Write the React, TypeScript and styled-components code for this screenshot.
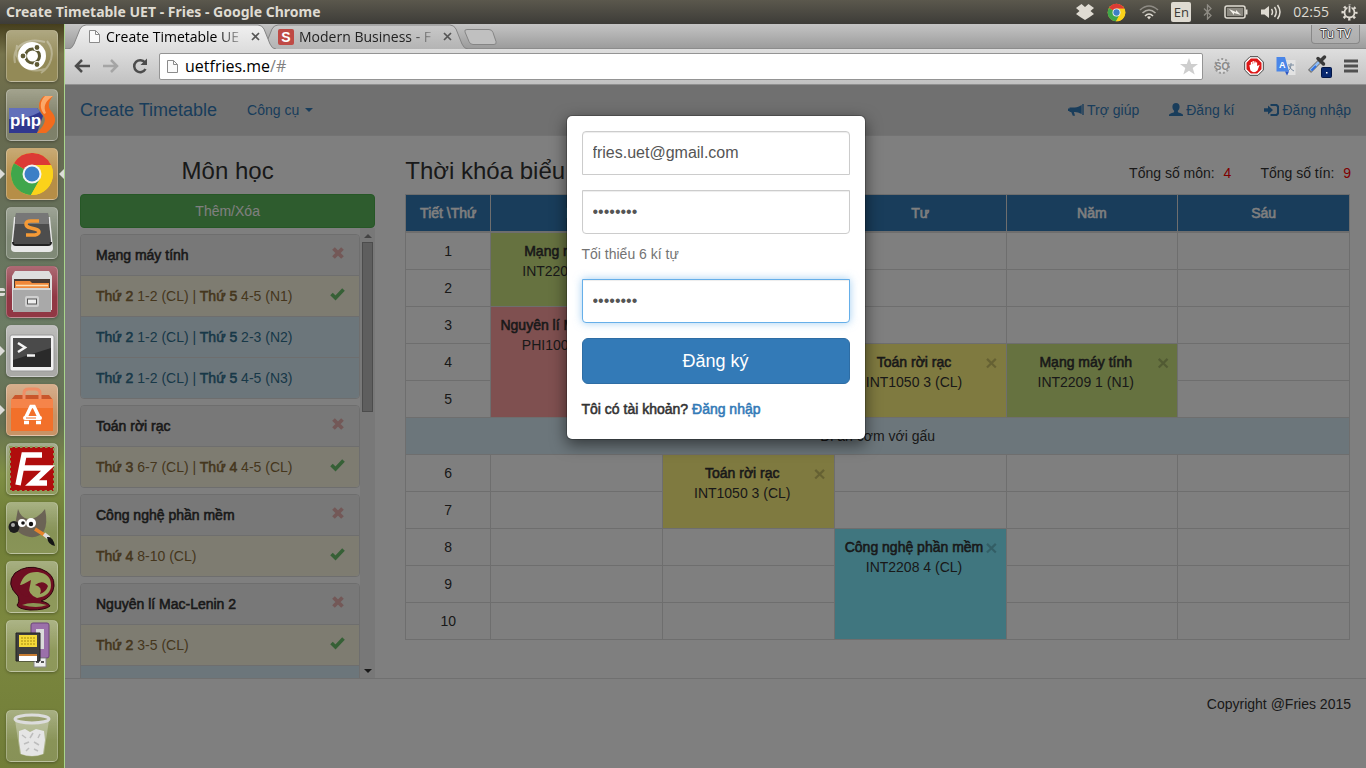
import React from "react";
import styled, { createGlobalStyle, css } from "styled-components";

const uiFont = `"Open Sans", "Noto Sans", sans-serif`;
const pageFont = `"Liberation Sans", Arial, sans-serif`;

const GlobalStyle = createGlobalStyle`
  *, *::before, *::after { box-sizing: border-box; }
  html, body { margin: 0; padding: 0; }
  button, input { font-family: inherit; }
  a { color: inherit; text-decoration: none; }
`;

/* ---------- desktop ---------- */

const Desktop = styled.div`
  display: flex;
  flex-direction: column;
  height: 100vh;
  overflow: hidden;
  background: #3c3b37;
`;

const Panel = styled.header`
  display: flex;
  align-items: center;
  justify-content: space-between;
  height: 24px;
  flex: none;
  padding: 0 8px 0 6px;
  background: linear-gradient(#5b584d, #3d3c38);
  color: #dfdbd2;
  font: 700 14px/24px "Noto Sans", sans-serif;
`;

const Indicators = styled.div`
  display: flex;
  align-items: center;
  gap: 12px;
  font-weight: 400;
  font-family: ${uiFont};

  svg { display: block; }
`;

const Keyboard = styled.span`
  width: 20px;
  height: 20px;
  border-radius: 2px;
  background: #dfdbd2;
  color: #3c3b37;
  font-size: 13px;
  line-height: 20px;
  text-align: center;
`;

const Workspace = styled.div`
  display: flex;
  flex: 1;
  min-height: 0;
`;

const Launcher = styled.nav`
  display: flex;
  flex-direction: column;
  gap: 7px;
  width: 65px;
  flex: none;
  padding: 6px 6px 6px;
  border-right: 1px solid #a9d48c;
  background: linear-gradient(
    #453e1c 0,
    #77744c 30px,
    #66684c 90px,
    #66705a 190px,
    #6c7c64 300px,
    #667052 400px,
    #7f8f45 450px,
    #6f7d36 500px,
    #7c883f 600px,
    #717d38 100%
  );
`;

const LauncherItem = styled.button<{ $tint?: string; $last?: boolean }>`
  position: relative;
  width: 52px;
  height: 52px;
  flex: none;
  padding: 0;
  border: 1px solid rgba(255, 255, 255, 0.25);
  border-radius: 5px;
  background: linear-gradient(rgba(255, 255, 255, 0.28), rgba(255, 255, 255, 0.04) 60%),
    ${(p) => p.$tint ?? "rgba(255, 255, 255, 0.12)"};
  box-shadow: 0 1px 3px rgba(0, 0, 0, 0.3);
  ${(p) => p.$last && "margin-top: auto;"}

  svg { display: block; width: 50px; height: 50px; }
`;

const Pip = styled.i<{ $side: "left" | "right" }>`
  position: absolute;
  top: 20px;
  ${(p) => p.$side}: -7px;
  border: 5px solid transparent;
  border-${(p) => p.$side}-color: #dcdcd8;
  border-${(p) => (p.$side === "left" ? "right" : "left")}-width: 0;
`;

const DoublePip = styled.i`
  position: absolute;
  top: 21px;
  left: -7px;
  width: 5px;
  height: 8px;
  border: solid #dcdcd8;
  border-width: 3px 0;
  border-radius: 0 2px 2px 0;
`;

/* ---------- browser ---------- */

const Browser = styled.div`
  display: flex;
  flex-direction: column;
  flex: 1;
  min-width: 0;
  font-family: ${uiFont};
`;

const TabStrip = styled.div`
  display: flex;
  align-items: flex-start;
  height: 25px;
  flex: none;
  padding-left: 3px;
  background: linear-gradient(#c4c4c4, #9c9c9c);
  border-bottom: 1px solid #8c8c8c;
`;

const Tab = styled.div<{ $active?: boolean }>`
  position: relative;
  z-index: ${(p) => (p.$active ? 2 : 1)};
  display: flex;
  align-items: center;
  gap: 5px;
  width: 208px;
  height: 25px;
  margin-right: -16px;
  padding: 0 16px 0 ${(p) => (p.$active ? 20 : 18)}px;
  color: ${(p) => (p.$active ? "#000" : "#222")};
  font-size: 14px;
  line-height: 24px;
`;

const TabShape = styled.svg`
  position: absolute;
  inset: 0;
  z-index: -1;
  width: 100%;
  height: 100%;
`;

const TabTitle = styled.span`
  flex: 1;
  overflow: hidden;
  white-space: nowrap;
  mask-image: linear-gradient(90deg, #000 80%, transparent);
`;

const PlainButton = styled.button`
  display: flex;
  align-items: center;
  justify-content: center;
  padding: 0;
  border: 0;
  background: none;
  color: #555;
`;

const NewTab = styled(PlainButton)`
  margin: 5px 0 0 11px;
`;

const Profile = styled.button`
  height: 19px;
  margin: 1px 6px 0 auto;
  padding: 0 8px;
  border: 1px solid #888;
  border-top: 0;
  border-radius: 0 0 4px 4px;
  background: linear-gradient(#b8b8b8, #adadad);
  color: #fff;
  font-size: 12px;
  line-height: 18px;
  text-shadow: 1px 0 #444, -1px 0 #444, 0 1px #444, 0 -1px #444;
`;

const Toolbar = styled.div`
  display: flex;
  align-items: center;
  height: 36px;
  flex: none;
  padding: 0 8px 1px 7px;
  background: linear-gradient(#dedede, #c1c1c1);
  border-bottom: 1px solid #909090;
`;

const ToolButton = styled(PlainButton)`
  width: 20px;
  height: 24px;
  margin-right: 9px;
`;

const Omnibox = styled.div`
  display: flex;
  align-items: center;
  gap: 6px;
  flex: 1;
  height: 27px;
  padding: 0 4px 0 6px;
  border: 1px solid #949494;
  border-radius: 2px;
  background: #fff;
  color: #000;
  font-size: 16px;
  line-height: 25px;

  em { font-style: normal; color: #808080; }
  svg:last-child { margin-left: auto; }
`;

const Extensions = styled.div`
  display: flex;
  align-items: center;
  gap: 12px;
  padding-left: 9px;
`;

/* ---------- page ---------- */

const Viewport = styled.div`
  position: relative;
  display: flex;
  flex-direction: column;
  flex: 1;
  min-height: 0;
  background: #fff;
  color: #333;
  font: 14px/20px ${pageFont};
`;

const emphasis = css`
  font-weight: 400;
  -webkit-text-stroke: 0.04em currentColor;
`;

const Strong = styled.strong`
  ${emphasis}
`;

const Navbar = styled.nav`
  display: flex;
  align-items: center;
  height: 51px;
  flex: none;
  padding: 0 15px;
  gap: 30px;
  border-bottom: 1px solid #e7e7e7;
  background: #e0e0e0;
  color: #337ab7;
`;

const Brand = styled.a`
  font-size: 18px;
`;

const NavLink = styled.a`
  display: flex;
  align-items: center;
  gap: 3px;
`;

const Caret = styled.i`
  margin-left: 3px;
  border: 4px solid transparent;
  border-top-color: currentColor;
  border-bottom-width: 0;
`;

const NavRight = styled.div`
  display: flex;
  gap: 30px;
  margin-left: auto;
`;

const Main = styled.main`
  display: grid;
  grid-template-columns: 1fr 3fr;
  flex: 1;
  min-height: 0;
`;

const Column = styled.section`
  display: flex;
  flex-direction: column;
  min-width: 0;
  min-height: 0;
  padding: 20px 15px 0;
`;

const Heading = styled.h3`
  margin: 0 0 8px;
  font-weight: 400;
  font-size: 24px;
  line-height: 30px;
  text-align: center;
`;

const AddButton = styled.button`
  height: 34px;
  flex: none;
  border: 1px solid #4cae4c;
  border-radius: 4px;
  background: #5cb85c;
  color: #fff;
  font-size: 14px;
`;

const Scroller = styled.div`
  display: flex;
  flex: 1;
  min-height: 0;
  overflow: hidden;
`;

const CourseList = styled.div`
  flex: 1;
  padding-top: 6px;
`;

const Course = styled.section`
  margin-bottom: 6px;
  border: 1px solid #ddd;
  border-radius: 4px;
  overflow: hidden;
`;

const CourseRow = styled.div<{ $kind: "head" | "chosen" | "free" }>`
  display: flex;
  align-items: center;
  justify-content: space-between;
  height: 41px;
  padding: 0 14px 0 15px;
  border-bottom: 1px solid #ddd;
  background: ${(p) => ({ head: "#f0f0f0", chosen: "#fcf8e3", free: "#d9edf7" })[p.$kind]};
  color: ${(p) => ({ head: "#333", chosen: "#8a6d3b", free: "#31708f" })[p.$kind]};

  &:last-child { height: 40px; border-bottom: 0; }
  svg { display: block; margin-bottom: 4px; }
`;

const ScrollTrack = styled.div`
  display: flex;
  flex-direction: column;
  align-items: center;
  justify-content: space-between;
  width: 15px;
  padding: 6px 0 5px;
  background: #f1f1f1;
`;

const ScrollArrow = styled.i<{ $down?: boolean }>`
  border: 4px solid transparent;
  ${(p) =>
    p.$down
      ? "border-top-color: #333; border-bottom-width: 0;"
      : "border-bottom-color: #888; border-top-width: 0;"}
`;

const ScrollThumb = styled.div`
  width: 11px;
  height: 170px;
  margin: 4px 0 auto;
  border: 1px solid #999;
  background: #bcbcbc;
`;

const TitleRow = styled.div`
  display: flex;
  justify-content: space-between;
  align-items: flex-start;
`;

const Totals = styled.div`
  display: flex;
  gap: 29px;
  padding-top: 7px;

  b { margin-left: 5px; color: #f00; font-weight: 400; }
`;

const Schedule = styled.table`
  width: calc(100% - 1px);
  border-collapse: collapse;
  table-layout: fixed;
  text-align: center;

  th, td {
    height: 37px;
    padding: 8px;
    border: 1px solid #ddd;
    vertical-align: top;
  }
  thead th {
    ${emphasis}
    border-bottom-width: 2px;
    background: #337ab7;
    color: #fff;
  }
  tbody th { font-weight: 400; }
  thead th:first-child { width: 85px; }
`;

const Slot = styled.td<{ $color?: string }>`
  background: ${(p) => p.$color ?? "transparent"};
  white-space: nowrap;
`;

const Lunch = styled.td`
  background: #d9edf7;
`;

const Close = styled.button`
  float: right;
  padding: 0;
  border: 0;
  background: none;
  color: #000;
  font-weight: 700;
  font-size: 21px;
  line-height: 21px;
  opacity: 0.2;
`;

const Footer = styled.footer`
  height: 90px;
  flex: none;
  padding: 15px;
  border-top: 1px solid #e0e0e0;
  text-align: right;
`;

/* ---------- dialog ---------- */

const Backdrop = styled.div`
  position: absolute;
  inset: 0;
  z-index: 10;
  display: flex;
  align-items: flex-start;
  justify-content: center;
  padding-top: 30px;
  background: rgba(0, 0, 0, 0.5);
`;

const Dialog = styled.form`
  display: flex;
  flex-direction: column;
  width: 300px;
  padding: 15px 15px 20px;
  border: 1px solid rgba(0, 0, 0, 0.2);
  border-radius: 6px;
  background: #fff;
  background-clip: padding-box;
  box-shadow: 0 5px 15px rgba(0, 0, 0, 0.5);
`;

const Field = styled.input<{ $edge: "top" | "bottom"; $focused?: boolean }>`
  width: 100%;
  height: 44px;
  margin: 0 0 15px;
  padding: 10px;
  border: 1px solid ${(p) => (p.$focused ? "#66afe9" : "#ccc")};
  border-radius: ${(p) => (p.$edge === "top" ? "4px 4px 0 0" : "0 0 4px 4px")};
  outline: 0;
  color: #555;
  font-size: 16px;
  box-shadow: inset 0 1px 1px rgba(0, 0, 0, 0.075)
    ${(p) => p.$focused && ", 0 0 8px rgba(102, 175, 233, 0.6)"};
`;

const Hint = styled.p`
  margin: -5px 0 15px;
  color: #737373;
`;

const Submit = styled.button`
  height: 46px;
  margin-bottom: 15px;
  border: 1px solid #2e6da4;
  border-radius: 6px;
  background: #337ab7;
  color: #fff;
  font-size: 18px;
`;

const SignIn = styled.p`
  ${emphasis}
  margin: 0;

  a { color: #337ab7; }
`;

/* ---------- icons ---------- */

const ChromeLogo = ({ size }: { size: number }) => (
  <svg width={size} height={size} viewBox="0 0 50 50">
    <circle cx="25" cy="25" r="21" fill="#fbd21a" />
    <path d="M25 25 7 14.200A21 21 0 0 1 44 16H25z" fill="#dc3b35" />
    <path d="M25 25 7 14.200A21 21 0 0 0 24 46l9-16z" fill="#3fa64b" />
    <path d="M25 16h19a21 21 0 0 1-20 30l9-16z" fill="#fbd21a" />
    <circle cx="25" cy="25" r="9.500" fill="#f4f4f4" />
    <circle cx="25" cy="25" r="7.500" fill="#3c7fc6" />
  </svg>
);

const PageIcon = () => (
  <svg width="13" height="15" viewBox="0 0 13 15">
    <path d="M1.500 1.500h6l4 4v8h-10z" fill="#fafafa" stroke="#8b8b8b" />
    <path d="M7.500 1.500v4h4" fill="none" stroke="#8b8b8b" />
  </svg>
);

const CloseIcon = () => (
  <svg width="9" height="9" viewBox="0 0 9 9">
    <path d="M1 1l7 7M8 1l-7 7" stroke="#555" strokeWidth="1.700" />
  </svg>
);

const RemoveIcon = () => (
  <svg width="14" height="14" viewBox="0 0 14 14">
    <path d="M2.500 2.500l9 9M11.500 2.500l-9 9" stroke="#d9534f" strokeWidth="3.800" opacity=".4" />
  </svg>
);

const OkIcon = () => (
  <svg width="15" height="14" viewBox="0 0 15 14">
    <path d="M1.500 7l4 4L13.500 2.500" fill="none" stroke="#6cc06c" strokeWidth="3.600" />
  </svg>
);

const BullhornIcon = () => (
  <svg width="16" height="14" viewBox="0 0 16 14" fill="#337ab7">
    <path d="M14.300 1h1.400v11h-1.400zM13.700 2v9C11 9.500 9 9 6.800 8.900V4.500C9.200 4.300 11.300 3.500 13.700 2zM1.500 4.500h5.500v4.400H1.500zM0 5.500h1.500v2.400H0zM3 8.500h2.800l1.200 4.300H4.800z" />
  </svg>
);

const UserIcon = () => (
  <svg width="14" height="14" viewBox="0 0 14 14" fill="#337ab7">
    <path d="M7 0c2.300 0 3.600 1.600 3.600 3.700 0 1.700-.8 3.300-1.700 4v1.200c0 .4 4.100 1.400 4.800 2.400.3.500.3 1.200.3 1.700H0c0-.5 0-1.200.3-1.700.7-1 4.800-2 4.800-2.400V7.700c-.9-.7-1.700-2.300-1.700-4C3.400 1.600 4.700 0 7 0z" />
  </svg>
);

const LoginIcon = () => (
  <svg width="15" height="14" viewBox="0 0 15 14" fill="#337ab7">
    <path d="M0 5.300h4V2.500L9 7l-5 4.500V8.700H0z" />
    <path d="M6.500 1H13l2 2v8l-2 2H6.500v-2H12l1-1V4l-1-1H6.500z" />
  </svg>
);

const UbuntuLogo = () => (
  <svg viewBox="0 0 50 50">
    <g fill="none" stroke="#fff" strokeWidth="2" opacity=".3">
      <path d="M8 32C4 14 22 6 38 11M40 10c10 12 3 26-6 32M10 14C6 30 20 44 38 38" />
    </g>
    <circle cx="25" cy="25" r="14" fill="#fff" />
    <circle cx="25.500" cy="25" r="7" fill="none" stroke="#5e5a35" strokeWidth="3" />
    <g fill="#5e5a35" stroke="#fff" strokeWidth="1.200">
      <circle cx="16" cy="25" r="3" />
      <circle cx="30" cy="16.500" r="3" />
      <circle cx="30" cy="33.500" r="3" />
    </g>
  </svg>
);

const PhpStormLogo = () => (
  <svg viewBox="0 0 50 50">
    <path d="M2 18h28l6 8-6 17H2z" fill="#30388f" />
    <path d="M2 18h28l3 4Q16 31 2 29z" fill="#6270ba" />
    <text x="3" y="36" fill="#fff" fontFamily="Liberation Sans" fontWeight="700" fontSize="17">php</text>
    <path d="M46 6H37c-7 6-6 13-1 19 4 5 1 11-6 18h9c10-8 12-14 5-22-4-5-2-10 2-15z" fill="#f26b1d" />
    <path d="M46 6H38c-6 6-5 13-1 18l2-1c-3-6-1-12 7-17z" fill="#fba869" />
  </svg>
);

const SublimeLogo = () => (
  <svg viewBox="0 0 50 50">
    <path d="M7 9 4 40q0 4 4 4h34q4 0 4-4L43 9z" fill="#e8e8e8" />
    <path d="M9 5h32l3 28q0 3-3 3H9q-3 0-3-3z" fill="#4d4d4d" />
    <path d="M9 5h32l1 11H8z" fill="#777" />
    <path d="M6 34q0 3 3 3h32q3 0 3-3" fill="none" stroke="#222" strokeWidth="2" />
    <path d="M32 13h-8q-5 0-5 3t5 4l4 1q4 1 4 3t-4 3h-9" fill="none" stroke="#f59a36" strokeWidth="3.500" />
  </svg>
);

const FilesLogo = () => (
  <svg viewBox="0 0 50 50">
    <path d="M8 4h34l3 5v34H5V9z" fill="#dedede" />
    <path d="M7 12h36v12H7z" fill="#4a3a33" />
    <path d="M8 14h15l2 2h17v8H8z" fill="#f0883a" />
    <path d="M9 18.500h32" stroke="#fce0b8" strokeWidth="1.500" />
    <path d="M6 21h38v24H6z" fill="#a9a9a9" />
    <path d="M6 21h38v2H6z" fill="#d6d6d6" />
    <rect x="18" y="29" width="14" height="11" rx="2" fill="#d0d0d0" />
    <rect x="20.500" y="32" width="9" height="5" fill="#eee" stroke="#555" />
  </svg>
);

const TerminalLogo = () => (
  <svg viewBox="0 0 50 50">
    <rect x="3" y="9" width="44" height="36" rx="2" fill="#f1f1f1" stroke="#999" />
    <path d="M6 12h38v29H6z" fill="#2a2a2a" />
    <path d="M6 12h38v10L6 34z" fill="#4a4a4a" />
    <path d="M11 17l7 4.500-7 4.500M20 29.500h8" fill="none" stroke="#f4f4f4" strokeWidth="2.500" />
  </svg>
);

const SoftwareLogo = () => (
  <svg viewBox="0 0 50 50">
    <path d="M4 15l4-5h34l4 5z" fill="#c9562b" />
    <path d="M17 15V8q0-4 5-4h6q5 0 5 4v7" fill="none" stroke="#f08d65" strokeWidth="3" />
    <path d="M4 14h42v32H4z" fill="#f2702a" />
    <path d="M4 14h42v9H4z" fill="#f5844a" />
    <path d="M18.500 33 24 21.500h3L32.500 33M17 37.500h5M29 37.500h5" fill="none" stroke="#fff" strokeWidth="3.500" />
    <rect x="16" y="31" width="19" height="4" rx="2" fill="#fff" />
    <path d="M19 33h10" stroke="#f2702a" />
  </svg>
);

const FileZillaLogo = () => (
  <svg viewBox="0 0 50 50">
    <path d="M3 3h44v44H3z" fill="#b00d0d" stroke="#8f9a5a" strokeWidth="2" strokeDasharray="2.500 2.500" />
    <path d="M11 41 17 11h18M15 24h14M28 24h13L25 39h15" fill="none" stroke="#fff" strokeWidth="5.500" />
  </svg>
);

const GimpLogo = () => (
  <svg viewBox="0 0 50 50">
    <path d="M11 6q3 9 10 10 10 0 17-10 3 14-1 22-5 7-14 6Q9 31 8 22z" fill="#6b6355" />
    <ellipse cx="7" cy="24" rx="5.500" ry="6" fill="#1d1d1d" />
    <circle cx="6" cy="22" r="2" fill="#aaa" />
    <circle cx="15" cy="20" r="4" fill="#fff" />
    <circle cx="24" cy="20" r="5" fill="#fff" />
    <circle cx="16" cy="20" r="1.800" fill="#111" />
    <circle cx="24" cy="21" r="2.200" fill="#111" />
    <path d="M28 26l11 7" stroke="#e8842c" strokeWidth="3.500" />
    <path d="M37 31l5 4" stroke="#ddd" strokeWidth="4" />
    <path d="M40 34q6-1 8 9-7-1-8-9z" fill="#151515" />
  </svg>
);

const RedOrbLogo = () => (
  <svg viewBox="0 0 50 50">
    <path d="M11 34Q-2 22 8 11 20 2 34 7q14 5 13 17-1 11-13 15 8 2 9 5-4 4-20 4-12-1-13-5 3-3 1-9z" fill="#6f0e22" stroke="#2c060e" />
    <path d="M13 23Q17 9 31 10q13 2 13 13 0 11-14 13-9-3-9-14z" fill="#98a35d" />
    <path d="M11 25l13-7-3 17q-8-2-10-10z" fill="#6f0e22" />
    <path d="M28 23q8-6 13 1-2 6-8 8 3-7-5-9z" fill="#6f0e22" />
    <path d="M15 43q10-4 25 0-10 4-25 0z" fill="#8b9755" />
  </svg>
);

const DisksLogo = () => (
  <svg viewBox="0 0 50 50">
    <rect x="24" y="2" width="18" height="35" rx="2" fill="#9b70aa" stroke="#6c457b" />
    <path d="M29 8h8v20h-8z" fill="#dadada" />
    <path d="M27 37h12v9H27z" fill="#efefef" stroke="#888" />
    <path d="M29 41h3M34 41h3" stroke="#555" strokeWidth="2" />
    <path d="M9 12h24v28H9z" fill="#3e3e3e" stroke="#222" />
    <path d="M12 14h18v12H12z" fill="#f4d93a" />
    <path d="M14 17h14M14 20h14M14 23h14" stroke="#a58a10" strokeDasharray="2 1" />
    <path d="M12 33h18v7H12z" fill="#fff" />
    <path d="M12 33h18v2H12z" fill="#c77c32" />
  </svg>
);

const TrashLogo = () => (
  <svg viewBox="0 0 50 50">
    <path d="M8 9l5 34q12 5 24 0l5-34z" fill="#fff" opacity=".3" />
    <path d="M12 20l6-2 5 3 6-3 8 2 1 9-2 14q-11 4-22 0l-2-13z" fill="#e5e5e5" />
    <path d="M15 24l4 3M26 22l-3 5M33 23l-2 4M17 33l5-2M27 31l5 3M19 40l3-3M31 40l-4-2" fill="none" stroke="#bdbdbd" strokeWidth="1.500" />
    <ellipse cx="25" cy="8" rx="17" ry="4" fill="#9aa06f" stroke="#dcdcdc" strokeWidth="3" />
  </svg>
);

const DropboxIcon = () => (
  <svg width="18" height="16" viewBox="0 0 18 16" fill="#dfdbd2">
    <path d="M5.500 0 9 3l3.500-3L18 4l-3.500 3L18 10l-5 3.500L9 16l-4-2.500L0 10l3.500-3L0 4z" />
  </svg>
);

const WifiIcon = () => (
  <svg width="20" height="15" viewBox="0 0 20 15" fill="none" strokeWidth="1.600">
    <path d="M1 5q9-8 18 0" stroke="#8f8c85" />
    <path d="M3.500 8q6.500-6 13 0" stroke="#b1aea6" />
    <path d="M6 11q4-4 8 0" stroke="#dfdbd2" />
    <path d="M10 14.500l-2-2.500q2-1.500 4 0z" fill="#dfdbd2" />
  </svg>
);

const BluetoothIcon = () => (
  <svg width="9" height="16" viewBox="0 0 9 16">
    <path d="M1 4.500l7 7L4.500 15V1L8 4.500l-7 7" fill="none" stroke="#8f8c85" strokeWidth="1.300" />
  </svg>
);

const BatteryIcon = () => (
  <svg width="25" height="14" viewBox="0 0 25 14">
    <rect x="1" y="1" width="20" height="12" rx="2" fill="none" stroke="#dfdbd2" strokeWidth="1.500" />
    <path d="M3 3h16v8H3z" fill="#8b8880" />
    <path d="M22.500 4.500v5" stroke="#dfdbd2" strokeWidth="2" />
    <path d="M5 4l7 3V5l5 5-7-2v2z" fill="#f2efe8" />
  </svg>
);

const SoundIcon = () => (
  <svg width="20" height="16" viewBox="0 0 20 16">
    <path d="M0 5.500h3.500L8 2v12l-4.500-3.500H0z" fill="#dfdbd2" />
    <path d="M10.500 5q2 3 0 6M13.500 3q3.500 5 0 10M16.500 1q5 7 0 14" fill="none" stroke="#dfdbd2" strokeWidth="1.500" />
  </svg>
);

const GearIcon = () => (
  <svg width="17" height="17" viewBox="0 0 17 17" fill="none" stroke="#dfdbd2">
    <circle cx="8.500" cy="8.500" r="5" strokeWidth="1.800" />
    <circle cx="8.500" cy="8.500" r="6.800" strokeWidth="2.500" strokeDasharray="2.300 3.040" strokeDashoffset="1" />
    <path d="M8.500 1v8" stroke="#4b4943" strokeWidth="4" />
    <path d="M8.500 1.500V8.500" strokeWidth="1.800" />
  </svg>
);

/* ---------- data ---------- */

type Lesson = { row: number; day: number; span: number; name: string; code: string; color: string };

const days = ["Hai", "Ba", "Tư", "Năm", "Sáu"];

const lessons: Lesson[] = [
  { row: 1, day: 0, span: 2, name: "Mạng máy tính", code: "INT2209 1 (CL)", color: "#cce480" },
  { row: 3, day: 0, span: 3, name: "Nguyên lí Mac-Lenin 2", code: "PHI1005 3 (CL)", color: "#ffa0a0" },
  { row: 4, day: 2, span: 2, name: "Toán rời rạc", code: "INT1050 3 (CL)", color: "#fff480" },
  { row: 4, day: 3, span: 2, name: "Mạng máy tính", code: "INT2209 1 (N1)", color: "#cce480" },
  { row: 6, day: 1, span: 2, name: "Toán rời rạc", code: "INT1050 3 (CL)", color: "#fff480" },
  { row: 8, day: 2, span: 3, name: "Công nghệ phần mềm", code: "INT2208 4 (CL)", color: "#80ecff" },
];

type Option = { chosen?: boolean; times: [string, string][] };

const courses: { name: string; options: Option[] }[] = [
  {
    name: "Mạng máy tính",
    options: [
      { chosen: true, times: [["Thứ 2", "1-2 (CL)"], ["Thứ 5", "4-5 (N1)"]] },
      { times: [["Thứ 2", "1-2 (CL)"], ["Thứ 5", "2-3 (N2)"]] },
      { times: [["Thứ 2", "1-2 (CL)"], ["Thứ 5", "4-5 (N3)"]] },
    ],
  },
  { name: "Toán rời rạc", options: [{ chosen: true, times: [["Thứ 3", "6-7 (CL)"], ["Thứ 4", "4-5 (CL)"]] }] },
  { name: "Công nghệ phần mềm", options: [{ chosen: true, times: [["Thứ 4", "8-10 (CL)"]] }] },
  {
    name: "Nguyên lí Mac-Lenin 2",
    options: [{ chosen: true, times: [["Thứ 2", "3-5 (CL)"]] }, { times: [] }],
  },
];

type LauncherApp = {
  label: string;
  logo: React.ReactNode;
  tint?: string;
  windows?: 1 | 2;
  focused?: boolean;
};

const apps: LauncherApp[] = [
  { label: "Dash", logo: <UbuntuLogo />, tint: "#8f8550" },
  { label: "PhpStorm", logo: <PhpStormLogo /> },
  { label: "Google Chrome", logo: <ChromeLogo size={50} />, tint: "#b3893f", windows: 1, focused: true },
  { label: "Sublime Text", logo: <SublimeLogo /> },
  { label: "Files", logo: <FilesLogo />, tint: "#8c2f3c", windows: 2 },
  { label: "Terminal", logo: <TerminalLogo />, tint: "#a5a5a2", windows: 1 },
  { label: "Software Center", logo: <SoftwareLogo />, tint: "#c68f60", windows: 1 },
  { label: "FileZilla", logo: <FileZillaLogo /> },
  { label: "GIMP", logo: <GimpLogo /> },
  { label: "Red Orb", logo: <RedOrbLogo /> },
  { label: "Disks", logo: <DisksLogo /> },
];

/* ---------- parts ---------- */

const TabBackground = ({ active }: { active?: boolean }) => (
  <TabShape viewBox="0 0 208 25" preserveAspectRatio="none">
    <defs>
      <linearGradient id={active ? "tabOn" : "tabOff"} x1="0" y1="0" x2="0" y2="1">
        <stop offset="0" stopColor={active ? "#f0f0f0" : "#c9c9c9"} />
        <stop offset="1" stopColor={active ? "#dedede" : "#b4b4b4"} />
      </linearGradient>
    </defs>
    <path
      d="M0 25q4 0 6-5l6-15q2-4 6-4h172q4 0 6 4l6 15q2 5 6 5"
      fill={`url(#${active ? "tabOn" : "tabOff"})`}
      stroke="#858585"
    />
  </TabShape>
);

function DayCells({ row }: { row: number }) {
  return (
    <>
      {days.map((name, day) => {
        const lesson = lessons.find((l) => l.day === day && row >= l.row && row < l.row + l.span);
        if (!lesson) return <Slot key={name} />;
        if (lesson.row !== row) return null;
        return (
          <Slot key={name} rowSpan={lesson.span} $color={lesson.color}>
            <Close type="button" aria-label={`Xóa ${lesson.name}`}>×</Close>
            <Strong>{lesson.name}</Strong>
            <br />
            {lesson.code}
          </Slot>
        );
      })}
    </>
  );
}

function Timetable() {
  return (
    <Schedule>
      <thead>
        <tr>
          <th>Tiết \Thứ</th>
          {days.map((day) => <th key={day}>{day}</th>)}
        </tr>
      </thead>
      <tbody>
        {[1, 2, 3, 4, 5, 6, 7, 8, 9, 10].map((row) => (
          <React.Fragment key={row}>
            {row === 6 && <tr><Lunch colSpan={6}>Đi ăn cơm với gấu</Lunch></tr>}
            <tr>
              <th scope="row">{row}</th>
              <DayCells row={row} />
            </tr>
          </React.Fragment>
        ))}
      </tbody>
    </Schedule>
  );
}

function Courses() {
  return (
    <Scroller>
      <CourseList>
        {courses.map((course) => (
          <Course key={course.name}>
            <CourseRow $kind="head"><Strong>{course.name}</Strong><RemoveIcon /></CourseRow>
            {course.options.map((option, i) => (
              <CourseRow key={i} $kind={option.chosen ? "chosen" : "free"}>
                <span>
                  {option.times.map(([day, time], j) => (
                    <React.Fragment key={day}>
                      {j > 0 && " | "}<Strong>{day}</Strong> {time}
                    </React.Fragment>
                  ))}
                </span>
                {option.chosen && <OkIcon />}
              </CourseRow>
            ))}
          </Course>
        ))}
      </CourseList>
      <ScrollTrack><ScrollArrow /><ScrollThumb /><ScrollArrow $down /></ScrollTrack>
    </Scroller>
  );
}

function RegisterDialog() {
  return (
    <Backdrop>
      <Dialog onSubmit={(e) => e.preventDefault()}>
        <Field $edge="top" type="email" aria-label="Email" defaultValue="fries.uet@gmail.com" />
        <Field $edge="bottom" type="password" aria-label="Mật khẩu" defaultValue="password" />
        <Hint>Tối thiểu 6 kí tự</Hint>
        <Field $edge="bottom" $focused type="password" aria-label="Nhập lại mật khẩu" defaultValue="password" />
        <Submit type="submit">Đăng ký</Submit>
        <SignIn>Tôi có tài khoản? <a href="#login">Đăng nhập</a></SignIn>
      </Dialog>
    </Backdrop>
  );
}

function BrowserChrome() {
  return (
    <>
      <TabStrip>
        <Tab $active>
          <TabBackground active />
          <PageIcon />
          <TabTitle>Create Timetable UE</TabTitle>
          <PlainButton aria-label="Close tab"><CloseIcon /></PlainButton>
        </Tab>
        <Tab>
          <TabBackground />
          <svg width="16" height="16" viewBox="0 0 16 16">
            <rect width="16" height="16" rx="2" fill="#bf4a45" />
            <text x="8" y="13" textAnchor="middle" fill="#fff" fontFamily="Liberation Sans" fontWeight="700" fontSize="14">S</text>
          </svg>
          <TabTitle>Modern Business - F</TabTitle>
          <PlainButton aria-label="Close tab"><CloseIcon /></PlainButton>
        </Tab>
        <NewTab aria-label="New tab">
          <svg width="34" height="16" viewBox="0 0 34 16">
            <path d="M4 .5h22q3 0 4 3l3 9q1 3-2 3H10q-3 0-4-3L2 3Q1 .5 4 .5z" fill="#c0c0c0" stroke="#858585" />
          </svg>
        </NewTab>
        <Profile>Tu TV</Profile>
      </TabStrip>
      <Toolbar>
        <ToolButton aria-label="Back">
          <svg width="16" height="14" viewBox="0 0 16 14"><path d="M8 1 2 7l6 6M2 7h14" fill="none" stroke="#4c4c4c" strokeWidth="2.500" /></svg>
        </ToolButton>
        <ToolButton aria-label="Forward">
          <svg width="16" height="14" viewBox="0 0 16 14"><path d="M8 1l6 6-6 6M14 7H0" fill="none" stroke="#a5a5a5" strokeWidth="2.500" /></svg>
        </ToolButton>
        <ToolButton aria-label="Reload">
          <svg width="16" height="16" viewBox="0 0 16 16">
            <path d="M13 4.500A6 6 0 1 0 13.500 11" fill="none" stroke="#4c4c4c" strokeWidth="2.500" />
            <path d="M15 .5V7H8.500z" fill="#4c4c4c" />
          </svg>
        </ToolButton>
        <Omnibox>
          <PageIcon />
          <span>uetfries.me<em>/#</em></span>
          <svg width="18" height="17" viewBox="0 0 18 17">
            <path d="M9 0l2.200 6H18l-5.300 4 2 6.500L9 12.700l-5.700 3.800 2-6.500L0 6h6.800z" fill="#cecece" />
          </svg>
        </Omnibox>
        <Extensions>
          <svg width="20" height="20" viewBox="0 0 20 20">
            <circle cx="10" cy="10" r="7" fill="#ddd" stroke="#999" strokeWidth="2" strokeDasharray="2 2" />
            <text x="10" y="14" textAnchor="middle" fill="#888" fontFamily="Liberation Sans" fontWeight="700" fontSize="10">SO</text>
          </svg>
          <svg width="20" height="20" viewBox="0 0 20 20">
            <path d="M6 .7h8L19.300 6v8L14 19.300H6L.7 14V6z" fill="#fff" stroke="#444" />
            <path d="M6.800 2.500h6.400l4.300 4.300v6.400l-4.300 4.300H6.800l-4.300-4.300V6.800z" fill="#dd1717" />
            <path d="M6 9l1 5q3 3 6 0l1.500-4-2 1V6.500M7.500 11V6M9.200 10V5M11 10V5.500" fill="#fff" stroke="#fff" strokeWidth="1.300" />
          </svg>
          <svg width="20" height="20" viewBox="0 0 20 20">
            <path d="M9 4h10.500v15H12z" fill="#e3e3e3" />
            <path d="M12 9h6M15 7v2q0 4-3 6M13 10q2 4 5 5" fill="none" stroke="#7b8ca0" />
            <path d="M.5 1H9l4 14.500H.5z" fill="#4a86e8" />
            <path d="M9 15.500h4l-2 4z" fill="#2a56c6" />
            <text x="3" y="12" fill="#fff" fontFamily="Liberation Sans" fontWeight="700" fontSize="9">A</text>
          </svg>
          <svg width="24" height="24" viewBox="0 0 24 24">
            <path d="M1.500 17.500 12 7" stroke="#777" strokeWidth="4.500" />
            <path d="M2.500 16.500 11 8" stroke="#8fbcf5" strokeWidth="2.500" />
            <path d="M3.500 16.500 8 12" stroke="#2f6fe0" strokeWidth="2" />
            <path d="M10 4.500l5.500 5.500M12.500 7l4-4" stroke="#3a3a3a" strokeWidth="3.500" strokeLinecap="round" />
            <rect x="13.500" y="13.500" width="10" height="10" rx="1" fill="#08286f" stroke="#041746" />
            <path d="M18 18h1.500v1.500H18z" fill="#fff" />
          </svg>
          <PlainButton aria-label="Menu">
            <svg width="14" height="14" viewBox="0 0 14 14"><path d="M0 2h14M0 7h14M0 12h14" stroke="#505050" strokeWidth="3" /></svg>
          </PlainButton>
        </Extensions>
      </Toolbar>
    </>
  );
}

export default function App() {
  return (
    <Desktop>
      <GlobalStyle />
      <Panel>
        <span>Create Timetable UET - Fries - Google Chrome</span>
        <Indicators>
          <DropboxIcon />
          <ChromeLogo size={21} />
          <WifiIcon />
          <Keyboard>En</Keyboard>
          <BluetoothIcon />
          <BatteryIcon />
          <SoundIcon />
          <span>02:55</span>
          <GearIcon />
        </Indicators>
      </Panel>
      <Workspace>
        <Launcher>
          {apps.map((app) => (
            <LauncherItem key={app.label} aria-label={app.label} $tint={app.tint}>
              {app.windows === 1 && <Pip $side="left" />}
              {app.windows === 2 && <DoublePip />}
              {app.focused && <Pip $side="right" />}
              {app.logo}
            </LauncherItem>
          ))}
          <LauncherItem aria-label="Trash" $last><TrashLogo /></LauncherItem>
        </Launcher>
        <Browser>
          <BrowserChrome />
          <Viewport>
            <Navbar>
              <Brand href="#home">Create Timetable</Brand>
              <NavLink href="#tools">Công cụ <Caret /></NavLink>
              <NavRight>
                <NavLink href="#help"><BullhornIcon />Trợ giúp</NavLink>
                <NavLink href="#register"><UserIcon />Đăng kí</NavLink>
                <NavLink href="#login"><LoginIcon />Đăng nhập</NavLink>
              </NavRight>
            </Navbar>
            <Main>
              <Column>
                <Heading>Môn học</Heading>
                <AddButton type="button">Thêm/Xóa</AddButton>
                <Courses />
              </Column>
              <Column>
                <TitleRow>
                  <Heading>Thời khóa biểu</Heading>
                  <Totals>
                    <span>Tổng số môn: <b>4</b></span>
                    <span>Tổng số tín: <b>9</b></span>
                  </Totals>
                </TitleRow>
                <Timetable />
              </Column>
            </Main>
            <Footer>Copyright @Fries 2015</Footer>
            <RegisterDialog />
          </Viewport>
        </Browser>
      </Workspace>
    </Desktop>
  );
}
